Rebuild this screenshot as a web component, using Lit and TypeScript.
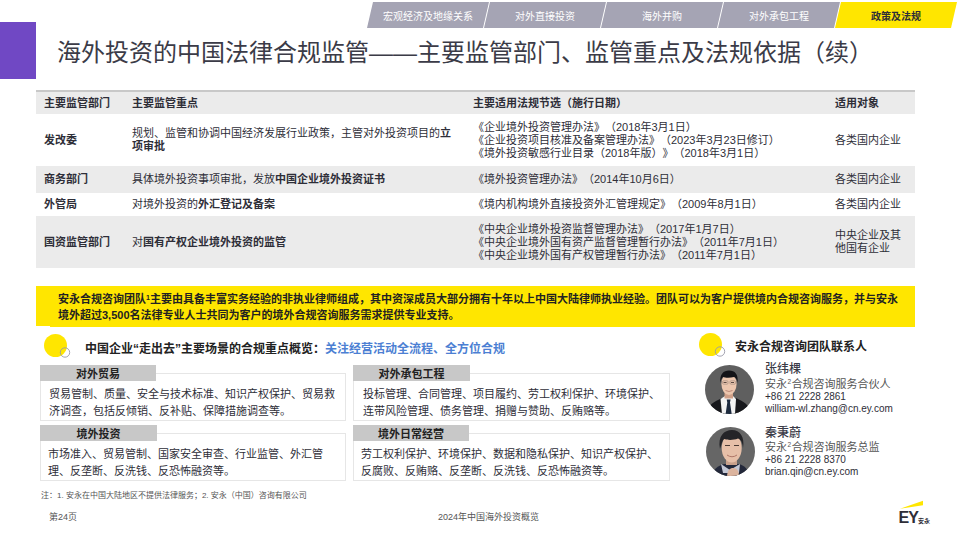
import { LitElement, html, css, svg } from "lit";
import { customElement } from "lit/decorators.js";

const marker = html`<svg class="marker" viewBox="0 0 30 24" aria-hidden="true">
  <circle cx="11.5" cy="11.5" r="11.5" fill="#ffe600"></circle>
  <circle cx="21" cy="18.5" r="4.7" fill="none" stroke="#9a9aa8" stroke-width="0.9"></circle>
</svg>`;

const avatar1 = svg`<svg class="avatar" width="49" height="49" viewBox="0 0 49 49">
  <defs><clipPath id="a1"><circle cx="24.5" cy="24.5" r="24.5"></circle></clipPath></defs>
  <g clip-path="url(#a1)">
    <rect width="49" height="49" fill="#5f5f5f"></rect>
    <path d="M2 49 C3 39 9 37 17 33 L31 33 C39 37 44 39 46 49Z" fill="#17181c"></path>
    <path d="M15.5 34 L20 31 L28 31 L31 34 L30 49 L17 49Z" fill="#f4f4f4"></path>
    <path d="M21.7 34.5 L25.6 34.5 L25 37.5 L26.7 49 L20.6 49 L22.3 37.5Z" fill="#1e2b3f"></path>
    <rect x="19.5" y="26" width="8.5" height="7.5" fill="#d0a088"></rect>
    <ellipse cx="24" cy="19" rx="7.6" ry="11" fill="#ecc6ae"></ellipse>
    <path d="M15.4 18 C14.5 9 18.5 5.5 24 5.5 C30 5.5 33.5 9 32.6 18 C32 14.5 31 13 29 12 C25 13 20 12.8 18 12 C16.6 13 16 15 15.4 18Z" fill="#141418"></path>
    <rect x="17.6" y="15.8" width="5.4" height="3.4" rx="1" fill="none" stroke="#8a7a72" stroke-width="0.5"></rect>
    <rect x="25" y="15.8" width="5.4" height="3.4" rx="1" fill="none" stroke="#8a7a72" stroke-width="0.5"></rect>
    <path d="M18.6 17.5h3M26 17.5h3" stroke="#4d3c36" stroke-width="0.9"></path>
    <path d="M20.5 25.5 Q24 27.5 27.5 25.5" stroke="#b0786a" stroke-width="0.8" fill="none"></path>
  </g>
</svg>`;

const avatar2 = svg`<svg class="avatar" width="49" height="49" viewBox="0 0 49 49">
  <defs><clipPath id="a2"><circle cx="24.5" cy="24.5" r="24.5"></circle></clipPath></defs>
  <g clip-path="url(#a2)">
    <rect width="49" height="49" fill="#666"></rect>
    <path d="M5 49 C7 42 12 39 18 37 L33 37 C39 39 42 42 44 49Z" fill="#23283a"></path>
    <path d="M15 37 L24 43 L34 37 L33 46 L17 46Z" fill="#c4c7d4"></path>
    <rect x="20" y="29" width="11" height="9" fill="#c8a08a"></rect>
    <ellipse cx="25.7" cy="21" rx="10" ry="14.5" fill="#e6bfa8"></ellipse>
    <path d="M14 22 C11.5 9 18 3 26 3 C34 3 39 10 37 21 C36.5 15 35 13 32 11.5 C27 13.5 21 13 18 12 C16 14 15.5 18 14 22Z" fill="#242428"></path>
    <path d="M19 18.5h5M28 18.5h5" stroke="#4a3a34" stroke-width="1.2"></path>
    <path d="M21 28 Q26 31.5 31 28" stroke="#a86e60" stroke-width="0.9" fill="none"></path>
    <path d="M21 49 C21.5 43 24 41 27 41 C31 41 33 44 33 49Z" fill="#dcb49e"></path>
  </g>
</svg>`;

const tabs = ["宏观经济及地缘关系", "对外直接投资", "海外并购", "对外承包工程", "政策及法规"];

const rows = [
  { cls: "", h: 52, dept: "发改委", focus: html`规划、监管和协调中国经济发展行业政策，主管对外投资项目的<b>立<br />项审批</b>`,
    laws: ["《企业境外投资管理办法》（2018年3月1日）", "《企业投资项目核准及备案管理办法》（2023年3月23日修订）", "《境外投资敏感行业目录（2018年版）》（2018年3月1日）"], target: html`各类国内企业` },
  { cls: "alt", h: 27, dept: "商务部门", focus: html`具体境外投资事项审批，发放<b>中国企业境外投资证书</b>`,
    laws: ["《境外投资管理办法》（2014年10月6日）"], target: html`各类国内企业` },
  { cls: "", h: 23, dept: "外管局", focus: html`对境外投资的<b>外汇登记及备案</b>`,
    laws: ["《境内机构境外直接投资外汇管理规定》（2009年8月1日）"], target: html`各类国内企业` },
  { cls: "alt", h: 52, dept: "国资监管部门", focus: html`对<b>国有产权企业境外投资的监管</b>`,
    laws: ["《中央企业境外投资监督管理办法》（2017年1月7日）", "《中央企业境外国有资产监督管理暂行办法》（2011年7月1日）", "《中央企业境外国有产权管理暂行办法》（2011年7月1日）"], target: html`中央企业及其<br />他国有企业` },
];

const cards = [
  { title: "对外贸易", tw: 116, pad: 9, lines: ["贸易管制、质量、安全与技术标准、知识产权保护、贸易救", "济调查，包括反倾销、反补贴、保障措施调查等。"] },
  { title: "对外承包工程", tw: 117, pad: 10, lines: ["投标管理、合同管理、项目履约、劳工权利保护、环境保护、", "连带风险管理、债务管理、捐赠与赞助、反贿赂等。"] },
  { title: "境外投资", tw: 117, pad: 8, lines: ["市场准入、贸易管制、国家安全审查、行业监管、外汇管", "理、反垄断、反洗钱、反恐怖融资等。"] },
  { title: "境外日常经营", tw: 116, pad: 8, lines: ["劳工权利保护、环境保护、数据和隐私保护、知识产权保护、", "反腐败、反贿赂、反垄断、反洗钱、反恐怖融资等。"] },
];

const contacts = [
  { av: avatar1, name: "张纬棵", role: "合规咨询服务合伙人", phone: "+86 21 2228 2861", mail: "william-wl.zhang@cn.ey.com", cls: "c1" },
  { av: avatar2, name: "秦秉蔚", role: "合规咨询服务总监", phone: "+86 21 2228 8370", mail: "brian.qin@cn.ey.com", cls: "c2" },
];

@customElement("app-root")
export class AppRoot extends LitElement {
  static styles = css`
    :host {
      display: block;
      width: 961px;
      height: 540px;
      overflow: hidden;
      background: #fff;
      font-family: "Liberation Sans", "Noto Sans CJK SC", sans-serif;
      color: #2e2e38;
      text-spacing-trim: space-all;
    }
    .head { display: flex; height: 90px; }
    .bar { width: 36px; height: 57px; margin-top: 22px; background: #7048c4; flex: none; }
    .head-main { flex: 1; min-width: 0; }
    .tabs { display: flex; justify-content: flex-end; padding: 2px 4px 0 0; }
    .tab {
      width: 122px; height: 26px; margin-left: -5px;
      display: flex; align-items: center; justify-content: center;
      background: #a5a4b4; color: #fff; font-size: 10px;
      clip-path: polygon(6px 0, 100% 0, calc(100% - 6px) 100%, 0 100%);
    }
    .tab.active { background: #ffe600; color: #2e2e38; font-weight: 700; }
    h1 {
      margin: 10px 0 0 21px; font-size: 24px; line-height: 30px; font-weight: 400;
      color: #3b3b47; white-space: nowrap;
    }
    table {
      margin: 0 36px; width: 879px; border-collapse: collapse; table-layout: fixed;
      border-top: 2px solid #c8c8c8; font-size: 11px; line-height: 13px;
    }
    th { height: 22px; padding: 0 0 0 8px; background: #ebebeb; text-align: left; font-weight: 700; }
    td { padding: 0 0 0 8px; vertical-align: middle; white-space: nowrap; }
    tr.alt td { background: #ebebeb; }
    td:first-child { font-weight: 700; }
    td b { font-weight: 700; }
    .banner {
      position: relative;
      margin: 18px 46px 0 36px; height: 40px; padding: 2px 0 0 22px; box-sizing: border-box;
      background: #ffe600; font-size: 11px; font-weight: 700; line-height: 16px; color: #222;
      display: flex; flex-direction: column; justify-content: center; white-space: nowrap;
    }
    .banner::after { content: ""; position: absolute; left: 14px; right: 0; bottom: -1px; height: 1px; background: #ffe600; }
    .banner sup { font-size: 7px; line-height: 0; vertical-align: 3px; }
    .lower { display: flex; padding-top: 8px; }
    .left { width: 670px; padding-left: 40px; box-sizing: border-box; flex: none; }
    .right { padding-left: 29px; margin-top: -1px; }
    .sec { display: flex; align-items: center; height: 24px; margin-left: 4px; }
    .marker { flex: none; overflow: visible; width: 30px; height: 24px; }
    .sec-title { margin-left: 11px; font-size: 12px; font-weight: 700; color: #222; white-space: nowrap; padding-top: 2px; }
    .sec-title span { color: #4c7fd3; }
    .right .sec { margin-left: 0; }
    .right .sec-title { margin-left: 6px; padding-top: 0; }
    .cards { display: grid; grid-template-columns: 306px 317px; column-gap: 7px; row-gap: 4px; margin-top: 7px; }
    .card { position: relative; padding-top: 8px; height: 56px; box-sizing: border-box; }
    .card-box {
      height: 48px; box-sizing: border-box; border: 1px solid #e6e6e6; background: #fff;
      padding-top: 12px; font-size: 11px; line-height: 16.5px; white-space: nowrap;
    }
    .card-title {
      position: absolute; left: 0; top: 0; height: 16px; background: #c8c8c8;
      display: flex; align-items: center; justify-content: center;
      font-size: 11px; font-weight: 700; color: #222;
    }
    .note { margin: 10px 0 0 1px; font-size: 8px; line-height: 10px; color: #555; white-space: nowrap; }
    .contacts { margin: 8px 0 0 6px; }
    .contact { display: flex; align-items: flex-start; }
    .contact.c2 { margin: 12px 0 0 1px; }
    .avatar { flex: none; display: block; filter: blur(0.45px); }
    .info { margin-left: 11px; white-space: nowrap; margin-top: -4.5px; }
    .c2 .info { margin-left: 10px; margin-top: -0.5px; }
    .name { font-size: 12px; line-height: 17px; font-weight: 500; color: #3b3b47; }
    .c2 .name { line-height: 15px; }
    .role { font-size: 11px; line-height: 13px; color: #555; }
    .role sup { font-size: 6.5px; line-height: 0; vertical-align: 4px; margin: 0 0.5px; }
    .line { font-size: 10px; line-height: 12px; }
    .footer { position: relative; height: 0; }
    .pg, .doc { position: absolute; top: 512px; font-size: 9px; line-height: 11px; color: #555; white-space: nowrap; }
    .pg { left: 49px; }
    .doc { left: 438px; }
    .logo { position: absolute; left: 899px; top: 500px; width: 32px; height: 26px; }
    .logo svg { position: absolute; left: 0; top: 0; }
    .ey { position: absolute; left: -0.5px; top: 9px; font-size: 16px; line-height: 18px; font-weight: 700; letter-spacing: -1px; }
    .an { position: absolute; left: 19px; top: 17px; font-size: 6px; line-height: 8px; font-weight: 700; }
  `;

  render() {
    return html`
      <div class="footer">
        <div class="pg">第24页</div>
        <div class="doc">2024年中国海外投资概览</div>
        <div class="logo">
          <svg width="26" height="10" viewBox="0 0 26 10"><polygon points="1,8.7 24,0.7 24,5.3" fill="#ffe600"></polygon></svg>
          <div class="ey">EY</div><div class="an">安永</div>
        </div>
      </div>
      <div class="head">
        <div class="bar"></div>
        <div class="head-main">
          <div class="tabs">
            ${tabs.map((t, i) => html`<div class="tab ${i === 4 ? "active" : ""}">${t}</div>`)}
          </div>
          <h1>海外投资的中国法律合规监管——主要监管部门、监管重点及法规依据（续）</h1>
        </div>
      </div>
      <table>
        <colgroup><col style="width:88px" /><col style="width:341px" /><col style="width:362px" /><col style="width:88px" /></colgroup>
        <thead><tr><th>主要监管部门</th><th>主要监管重点</th><th>主要适用法规节选（施行日期）</th><th>适用对象</th></tr></thead>
        <tbody>
          ${rows.map(r => html`<tr class=${r.cls} style="height:${r.h}px">
            <td>${r.dept}</td><td>${r.focus}</td>
            <td>${r.laws.map(l => html`<div>${l}</div>`)}</td>
            <td>${r.target}</td>
          </tr>`)}
        </tbody>
      </table>
      <div class="banner">
        <div>安永合规咨询团队<sup>1</sup>主要由具备丰富实务经验的非执业律师组成，其中资深成员大部分拥有十年以上中国大陆律师执业经验。团队可以为客户提供境内合规咨询服务，并与安永</div>
        <div>境外超过3,500名法律专业人士共同为客户的境外合规咨询服务需求提供专业支持。</div>
      </div>
      <div class="lower">
        <div class="left">
          <div class="sec">${marker}<div class="sec-title">中国企业“走出去”主要场景的合规重点概览：<span>关注经营活动全流程、全方位合规</span></div></div>
          <div class="cards">
            ${cards.map(c => html`<div class="card">
              <div class="card-box" style="padding-left:${c.pad - 1}px">${c.lines.map(l => html`<div>${l}</div>`)}</div>
              <div class="card-title" style="width:${c.tw}px">${c.title}</div>
            </div>`)}
          </div>
          <div class="note">注：1. 安永在中国大陆地区不提供法律服务；2. 安永（中国）咨询有限公司</div>
        </div>
        <div class="right">
          <div class="sec">${marker}<div class="sec-title">安永合规咨询团队联系人</div></div>
          <div class="contacts">
            ${contacts.map(c => html`<div class="contact ${c.cls}">
              ${c.av}
              <div class="info">
                <div class="name">${c.name}</div>
                <div class="role">安永<sup>2</sup>${c.role}</div>
                <div class="line">${c.phone}</div>
                <div class="line">${c.mail}</div>
              </div>
            </div>`)}
          </div>
        </div>
      </div>
    `;
  }
}
